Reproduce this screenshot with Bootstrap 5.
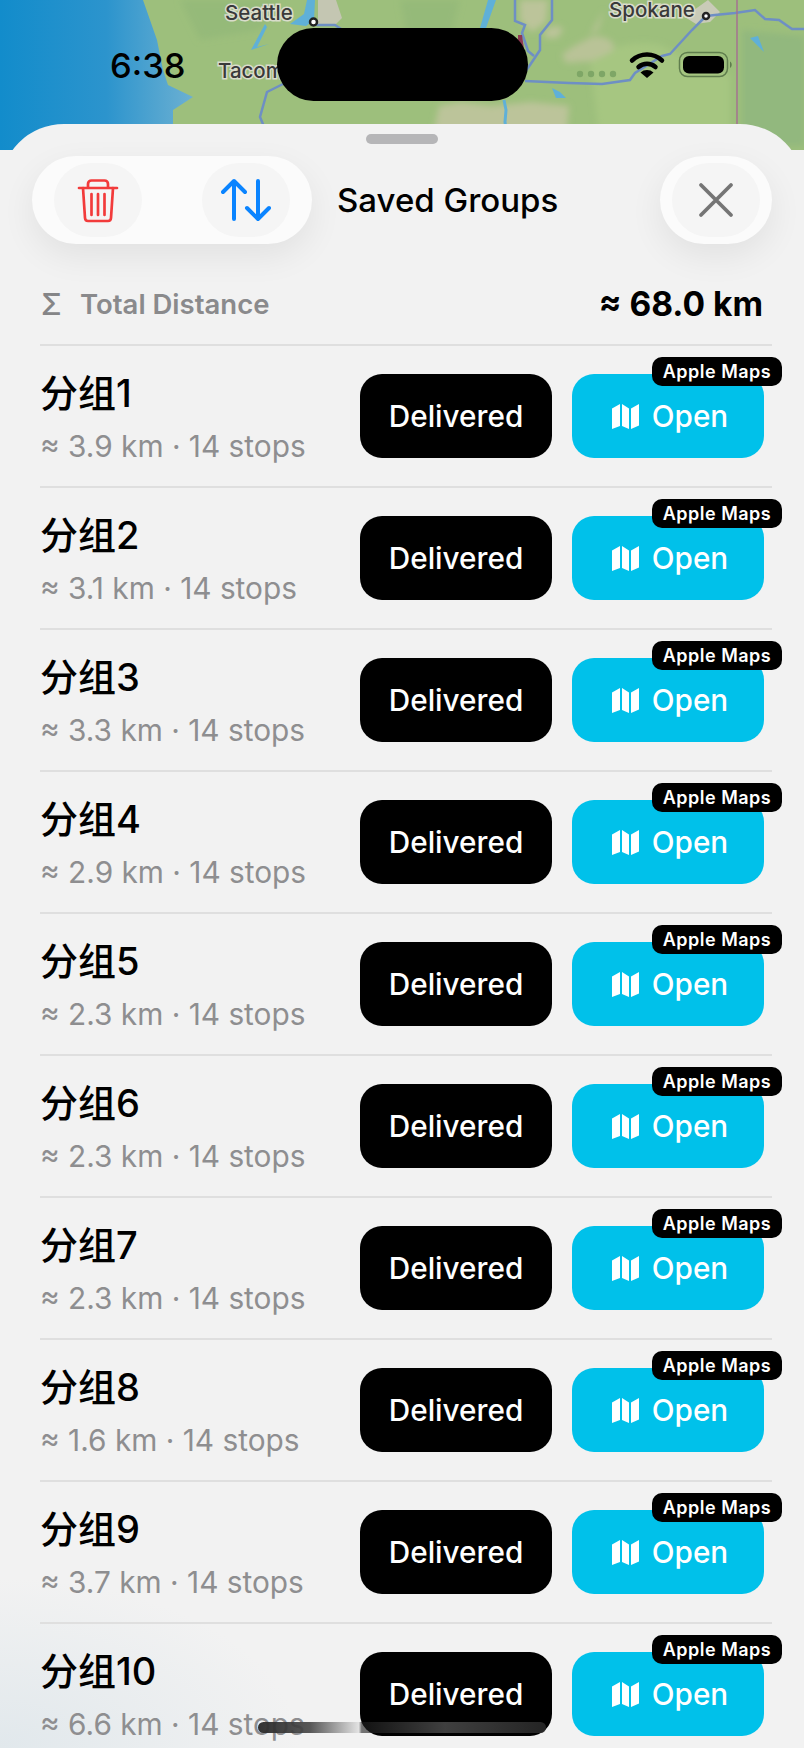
<!DOCTYPE html>
<html lang="en">

<head>
    <meta charset="UTF-8">
    <meta name="viewport" content="width=device-width, initial-scale=1.0">
    <title>Saved Groups</title>
    <link href="https://cdn.jsdelivr.net/npm/bootstrap@5.3.0/dist/css/bootstrap.min.css" rel="stylesheet">
    <style>
        html,
        body {
            height: 100%;
            overflow: hidden;
        }

        body {
            font-family: Inter, "Noto Sans CJK SC", sans-serif;
            background: #f2f2f2;
            position: relative;
        }

        .map-layer {
            display: block;
            width: 804px;
            height: 150px;
        }

        .map-label {
            font-family: Inter, sans-serif;
            font-weight: 500;
            font-size: 20.500px;
            fill: #3a3a3a;
            stroke: #d9dccb;
            stroke-width: 3px;
            paint-order: stroke;
        }

        .island {
            position: absolute;
            left: 277px;
            top: 28px;
            width: 251px;
            height: 73px;
            border-radius: 37px;
            background: #000;
        }

        .clock {
            position: absolute;
            left: 110px;
            top: 46px;
            font-size: 34.500px;
            line-height: 40px;
            font-weight: 500;
            color: #000;
        }

        .status-icons {
            position: absolute;
            left: 570px;
            top: 45px;
        }

        .sheet {
            margin-top: -26px;
            position: relative;
            height: 1624px;
            border-radius: 64px 64px 0 0;
            overflow: hidden;
            background:
                radial-gradient(300px 170px at 0 100%, #e1e8ec, rgba(225, 232, 236, 0) 100%),
                #f2f2f2;
        }

        .grabber {
            width: 72px;
            height: 10px;
            margin: 10px auto 12px;
            border-radius: 5px;
            background: #b6b6b8;
        }

        .top-bar {
            height: 88px;
            padding: 0 32px;
        }

        .glass-pill {
            height: 88px;
            border-radius: 44px;
            background: #fbfbfb;
            box-shadow: 0 12px 34px rgba(0, 0, 0, .07);
        }

        .tools-pill {
            width: 280px;
            padding: 0 22px;
        }

        .close-pill {
            width: 112px;
        }

        .glass-btn {
            width: 88px;
            height: 74px;
            padding: 0;
            border: 0;
            border-radius: 37px;
            background: #f5f5f5;
        }

        .sheet-title {
            margin-left: 25px;
            font-size: 33px;
            line-height: 88px;
            font-weight: 500;
            color: #000;
        }

        .total-row {
            height: 100px;
            padding: 40px 41px 0 41px;
        }

        .total-sign {
            width: 39px;
            font-size: 30px;
            line-height: 40px;
            font-weight: 500;
            color: #858587;
        }

        .total-label {
            font-size: 27.500px;
            line-height: 40px;
            font-weight: 600;
            color: #8a8a8c;
        }

        .total-value {
            font-size: 33.500px;
            line-height: 40px;
            font-weight: 700;
            color: #000;
        }

        .group-list {
            margin: 0 32px 0 40px;
        }

        .group-row {
            height: 142px;
            border-top: 2px solid #dfdfdf;
            padding: 28px 8px 0 0;
        }

        .group-text {
            margin-top: -3px;
        }

        .group-name {
            font-size: 38px;
            line-height: 44px;
            font-weight: 500;
            color: #000;
        }

        .group-meta {
            margin-top: 13px;
            font-size: 29.800px;
            line-height: 36px;
            color: #8e8e90;
        }

        .group-actions {
            gap: 20px;
        }

        .wide-btn {
            position: relative;
            width: 192px;
            height: 84px;
            padding: 0;
            border: 0;
            border-radius: 22px;
            font-size: 29.700px;
            font-weight: 500;
            color: #fff;
        }

        .wide-btn:hover,
        .wide-btn:active {
            color: #fff;
        }

        .delivered-btn {
            background: #000;
        }

        .open-btn {
            padding-left: 4px;
            background: #00c1ea;
        }

        .open-btn svg {
            margin-right: 13px;
        }

        .maps-tag {
            position: absolute;
            top: -17px;
            right: -18px;
            width: 130px;
            height: 29px;
            border-radius: 10px;
            background: #000;
            font-size: 18px;
            line-height: 29px;
            font-weight: 600;
            letter-spacing: .5px;
            text-align: center;
        }

        .home-bar {
            position: absolute;
            left: 258px;
            top: 1722px;
            width: 288px;
            height: 11px;
            border-radius: 6px;
            background: linear-gradient(90deg, rgba(40, 40, 40, .95) 0%, rgba(70, 70, 70, .9) 18%, rgba(190, 190, 190, .3) 35%, rgba(30, 30, 30, .6) 36%, rgba(70, 70, 70, .9) 65%, rgba(40, 40, 40, .9) 100%);
        }
    </style>
</head>

<body>
    <svg class="map-layer" viewBox="0 0 804 150">
        <defs>
            <linearGradient id="seaFill" x1="0" x2="1" y1="0" y2="0">
                <stop offset="0" stop-color="#128ccb" />
                <stop offset=".55" stop-color="#2c94cd" />
                <stop offset="1" stop-color="#6cb0d2" />
            </linearGradient>
            <filter id="softEdge" x="-10%" y="-10%" width="120%" height="120%">
                <feGaussianBlur stdDeviation="3" />
            </filter>
        </defs>
        <rect width="804" height="150" fill="#9dbf7c" />
        <g filter="url(#softEdge)">
            <path d="M590 60c20-15 50-20 70-15l40 20 30 10 0 70H600z" fill="#a6c681" />
            <path d="M742 30l62 6v110h-62z" fill="#92b87e" />
            <path d="M180 0h100l-20 30-60 10zM400 0h60l-10 40-40 10z" fill="#95ba79" />
            <path d="M562 55c8-8 22-14 30-18 12-2 22 4 22 10s-14 10-22 14l-26 2zM590 35l14-25-6 20z" fill="#b9c397" />
            <path d="M520 0h28l-2 22-14 10-12-12zM545 30c6-4 16-6 18 0l-6 8h-12z" fill="#bcc49a" />
            <path d="M439 106l22-4 30 4 40-4 38 4-4 44H430z" fill="#bcc49a" />
        </g>
        <path d="M0 0h143l14 40 6 30 5 15 25 12-20 13v40H0z" fill="url(#seaFill)" />
        <path d="M318 0h18l6 18-8 8-16-2z" fill="#c4c6b2" />
        <path d="M680 14l14-4 14-10 12 12-10 10-14 2z" fill="#c9cbb8" />
        <path d="M315 0h-8l-3 14-14 10 16 2 8-6zM265 24l-14 26 18-6-12 3 10-20zM488 0l-8 28 6 0 10-28zM552 88l8 4 6 6-10 0zM760 18l-2 18-8 2 14 14-6-16z" fill="#5fb0d8" />
        <g fill="none" stroke="#6e8fc4" stroke-width="2.500">
            <path d="M313 22l4 3h18l12 8" />
            <path d="M283 84l-16 8-7 25 5 12v21" />
            <path d="M706 16l-14 14-22 24-8 2-27 17-5 7-28 4-33-1-44-2" />
            <path d="M706 16l9-1 20-2 20-3 10 9 14 1 13 9h12" />
            <path d="M515 0v21l10 4-3 8 6 18 6 5" />
            <path d="M552 0v20l-12 15v15l-10 15-5 7" />
        </g>
        <path d="M504 100l2 10-1 12 2 14" fill="none" stroke="#5fb0d8" stroke-width="3" />
        <path d="M737 0v150" stroke="#a57291" stroke-width="1.500" />
        <path d="M518 35l4 0 2 14h-6z" fill="#8e3a52" />
        <text class="map-label" x="225" y="20">Seattle</text>
        <text class="map-label" x="218" y="78">Tacoma</text>
        <text class="map-label" x="609" y="17">Spokane</text>
        <circle cx="313.500" cy="22" r="3.500" fill="#fff" stroke="#222" stroke-width="2.500" />
        <circle cx="706" cy="16" r="3" fill="#fff" stroke="#222" stroke-width="2.500" />
        <g fill="#7ea666">
            <circle cx="580" cy="74" r="3.200" />
            <circle cx="591" cy="74" r="3.200" />
            <circle cx="602" cy="74" r="3.200" />
            <circle cx="613" cy="74" r="3.200" />
        </g>
    </svg>

    <div class="island"></div>
    <div class="clock">6:38</div>
    <svg class="status-icons" width="170" height="40" viewBox="570 45 170 40">
        <g fill="none" stroke="#000" stroke-width="4.500" stroke-linecap="round">
            <path d="M632 60.500a22 22 0 0 1 30 0" />
            <path d="M638.500 67a13 13 0 0 1 17 0" />
        </g>
        <path d="M640.500 72.500a10 10 0 0 1 13 0L647 78z" fill="#000" />
        <rect x="679.500" y="52.500" width="48" height="24" rx="8" fill="none" stroke="#5f7d4d" stroke-width="1.500" />
        <rect x="683" y="56" width="41" height="17.500" rx="6" fill="#000" />
        <path d="M730 61.500c2 1 2.500 5 0 6.500z" fill="#5f7d4d" />
    </svg>

    <div class="sheet">
        <div class="grabber"></div>
        <div class="top-bar d-flex align-items-center">
            <div class="glass-pill tools-pill d-flex align-items-center justify-content-between">
                <button type="button" class="btn glass-btn d-flex align-items-center justify-content-center">
                    <svg width="42" height="46" viewBox="0 0 42 46" fill="none" stroke="#f23b3b" stroke-width="2.700" stroke-linecap="round" stroke-linejoin="round">
                        <path d="M2 11h38" />
                        <path d="M11 10V7c0-2 1.500-3.500 3.500-3.500h13c2 0 3.500 1.500 3.500 3.500v3" />
                        <path d="M6 11l2 30c.1 1.800 1.300 3 3 3h20c1.700 0 2.900-1.200 3-3l2-30" />
                        <path d="M14.500 17v21M21 17v21M27.500 17v21" />
                    </svg>
                </button>
                <button type="button" class="btn glass-btn d-flex align-items-center justify-content-center">
                    <svg width="50" height="44" viewBox="0 0 50 44" fill="none" stroke="#0a84ff" stroke-width="4" stroke-linecap="round" stroke-linejoin="round">
                        <path d="M13 41V3M2 14L13 3l11 11" />
                        <path d="M37 3v38M26 30l11 11 11-11" />
                    </svg>
                </button>
            </div>
            <div class="sheet-title flex-grow-1">Saved Groups</div>
            <div class="glass-pill close-pill d-flex align-items-center justify-content-center">
                <button type="button" class="btn glass-btn d-flex align-items-center justify-content-center">
                    <svg width="36" height="36" viewBox="0 0 36 36" fill="none" stroke="#757575" stroke-width="3.800" stroke-linecap="round">
                        <path d="M3 3l30 30M33 3L3 33" />
                    </svg>
                </button>
            </div>
        </div>
        <div class="total-row d-flex align-items-start">
            <span class="total-sign">Σ</span>
            <span class="total-label flex-grow-1">Total Distance</span>
            <span class="total-value">≈ 68.0 km</span>
        </div>
        <div class="group-list" id="groupList"></div>
    </div>

    <div class="home-bar"></div>

    <script>
        const groups = [
            { name: '分组1', km: '3.9' },
            { name: '分组2', km: '3.1' },
            { name: '分组3', km: '3.3' },
            { name: '分组4', km: '2.9' },
            { name: '分组5', km: '2.3' },
            { name: '分组6', km: '2.3' },
            { name: '分组7', km: '2.3' },
            { name: '分组8', km: '1.6' },
            { name: '分组9', km: '3.7' },
            { name: '分组10', km: '6.6' }
        ];

        document.getElementById('groupList').innerHTML = groups.map(group => `
            <div class="group-row d-flex align-items-start">
                <div class="group-text flex-grow-1">
                    <div class="group-name">${group.name}</div>
                    <div class="group-meta">≈ ${group.km} km · 14 stops</div>
                </div>
                <div class="group-actions d-flex">
                    <button type="button" class="btn wide-btn delivered-btn">Delivered</button>
                    <button type="button" class="btn wide-btn open-btn d-flex align-items-center justify-content-center">
                        <svg width="27" height="25" viewBox="0 0 27 25" fill="#fff">
                            <path d="M0 4.500L8 0v22l-8 3zM10 0l7 4.500V25l-7-3zM19 4.500L27 0v21.500L19 25z" />
                        </svg>
                        <span>Open</span>
                        <span class="maps-tag">Apple Maps</span>
                    </button>
                </div>
            </div>
        `).join('');
    </script>
    <script src="https://cdn.jsdelivr.net/npm/bootstrap@5.3.0/dist/js/bootstrap.bundle.min.js"></script>
</body>

</html>
